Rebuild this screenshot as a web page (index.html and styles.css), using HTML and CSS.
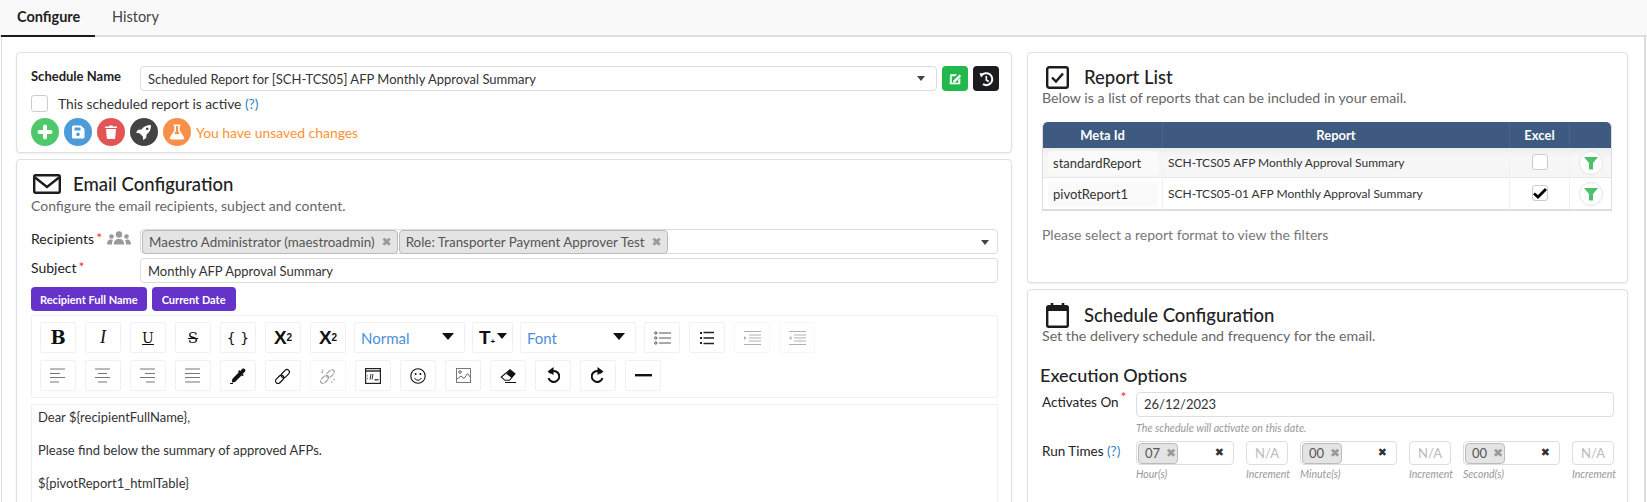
FILE: index.html
```html
<!DOCTYPE html>
<html lang="en">
<head>
<meta charset="utf-8">
<title>Scheduled Report</title>
<link rel="stylesheet" href="styles.css">
</head>
<body>
<nav class="tabs">
  <a class="tab tab-active">Configure</a>
  <a class="tab">History</a>
</nav>
<main class="page">
  <div class="col col-left">
    <section class="card card-name">
      <div class="name-row">
        <label class="name-label">Schedule Name</label>
        <div class="field field-grow">
          <span>Scheduled Report for [SCH-TCS05] AFP Monthly Approval Summary</span>
          <svg class="caret" viewBox="0 0 8 5"><path d="M0 0h8L4 5z"/></svg>
        </div>
        <button class="sq-btn sq-green"><svg viewBox="0 0 16 16" width="16" height="16"><path d="M3.500 3.500h6l-1.500 1.500H4.500v7h7V9l1.500-1.500v5.500H3z" fill="#fff" stroke="#fff" stroke-width=".6"/><path d="M6.500 9.500l6-6 1.700 1.700-6 6-2.200.5z" fill="#fff"/></svg></button>
        <button class="sq-btn sq-dark"><svg viewBox="0 0 16 16" width="16" height="16"><path d="M3.500 4.500A6 6 0 1 1 5 13.200" fill="none" stroke="#fff" stroke-width="2"/><path d="M1.500 2l5 .5-3.500 4z" fill="#fff"/><path d="M8.300 5v4l2.500 1.500" fill="none" stroke="#fff" stroke-width="1.600"/></svg></button>
      </div>
      <div class="active-row">
        <span class="check"></span>
        <span>This scheduled report is active <a class="help">(?)</a></span>
      </div>
      <div class="action-row">
        <button class="round r-green"><svg viewBox="0 0 28 28"><path d="M14 8.500v11M8.500 14h11" stroke="#fff" stroke-width="4" stroke-linecap="round"/></svg></button>
        <button class="round r-blue"><svg viewBox="0 0 28 28"><path fill="#fff" fill-rule="evenodd" d="M9.500 7.500h7.500l3.500 3.500v8a1.500 1.500 0 0 1-1.500 1.500H9.500A1.500 1.500 0 0 1 8 19V9a1.500 1.500 0 0 1 1.500-1.500zM10.500 9.500v3h6v-3zM14 14.500a1.800 1.800 0 1 0 .01 0z"/></svg></button>
        <button class="round r-red"><svg viewBox="0 0 28 28"><path fill="#fff" d="M8 8.500h4l.5-1h3l.5 1h4V10H8zM9 11h10l-.8 9a1 1 0 0 1-1 1h-6.400a1 1 0 0 1-1-1z"/></svg></button>
        <button class="round r-dark"><svg viewBox="0 0 28 28"><path fill="#fff" fill-rule="evenodd" d="M21 7c-4.500 0-7.500 1.500-9.500 4.500l-3.500.3-2 3 3.500.4 3.300 3.300.4 3.500 3-2 .3-3.500C19.500 14.500 21 11.500 21 7zM17.200 9.500a1.300 1.300 0 1 0 .01 0z"/></svg></button>
        <button class="round r-orange"><svg viewBox="0 0 28 28"><path fill="#fff" fill-rule="evenodd" d="M10.500 6.500h7V8h-.8v4.500l4.300 6.700c.7 1.100-.1 2.300-1.300 2.300H8.300c-1.200 0-2-1.200-1.300-2.300l4.300-6.700V8h-.8zM13 8v5l-1.800 3h5.600L15 13V8z"/></svg></button>
        <span class="unsaved">You have unsaved changes</span>
      </div>
    </section>

    <section class="card card-email">
      <header class="head head-email">
        <svg class="head-icon" viewBox="0 0 28 20" width="28" height="20"><rect x="1.200" y="1.200" width="25.600" height="17.600" rx="1.500" fill="none" stroke="#1c1c1c" stroke-width="2.400"/><path d="M2 3.500l12 9.500 12-9.500" fill="none" stroke="#1c1c1c" stroke-width="2.400"/></svg>
        <h2 class="head-title">Email Configuration</h2>
      </header>
      <p class="sub">Configure the email recipients, subject and content.</p>
      <div class="form-row form-row-first">
        <label class="form-label">Recipients<sup class="req">*</sup>
          <svg class="users" viewBox="0 0 24 14" width="24" height="14"><circle cx="12" cy="3.500" r="3.200" fill="#9a9a9a"/><circle cx="4.500" cy="5.500" r="2.300" fill="#9a9a9a"/><circle cx="19.500" cy="5.500" r="2.300" fill="#9a9a9a"/><path d="M6.800 13.500c0-3.500 1.800-5.500 5.200-5.500s5.200 2 5.200 5.500zM0 13.500c0-3 1.300-5 3.500-5 1 0 2 .3 2.500.8-.8 1-1 2.500-1 4.200zM24 13.500c0-3-1.300-5-3.500-5-1 0-2 .3-2.500.8.800 1 1 2.500 1 4.200z" fill="#9a9a9a"/></svg>
        </label>
        <div class="field field-grow field-tags">
          <span class="tag tag-wide">Maestro Administrator (maestroadmin)<i class="tag-x">✖</i></span>
          <span class="tag tag-wide">Role: Transporter Payment Approver Test<i class="tag-x">✖</i></span>
          <svg class="caret caret-end" viewBox="0 0 8 5"><path d="M0 0h8L4 5z"/></svg>
        </div>
      </div>
      <div class="form-row">
        <label class="form-label">Subject<sup class="req">*</sup></label>
        <div class="field field-grow">Monthly AFP Approval Summary</div>
      </div>
      <div class="var-row">
        <button class="var-btn">Recipient Full Name</button>
        <button class="var-btn">Current Date</button>
      </div>
      <div class="toolbar">
        <div class="tool-row">
          <span class="tool t-bold">B</span>
          <span class="tool t-italic">I</span>
          <span class="tool t-under">U</span>
          <span class="tool t-strike">S</span>
          <span class="tool t-code">{ }</span>
          <span class="tool t-script">X<sup>2</sup></span>
          <span class="tool t-script">X<sub>2</sub></span>
          <span class="tool dd dd-normal"><span class="dd-text">Normal</span><i class="dd-caret"></i></span>
          <span class="tool dd dd-size"><span class="t-size">T<small>+</small></span><i class="dd-caret"></i></span>
          <span class="tool dd dd-font"><span class="dd-text">Font</span><i class="dd-caret"></i></span>
          <span class="tool tool-after"><svg viewBox="0 0 17 14" width="17" height="14"><g fill="none" stroke="#555"><circle cx="1.800" cy="2" r="1.200"/><circle cx="1.800" cy="7" r="1.200"/><circle cx="1.800" cy="12" r="1.200"/></g><path d="M5 2h12M5 7h12M5 12h12" stroke="#555" stroke-width="1.200"/></svg></span>
          <span class="tool"><svg viewBox="0 0 14 14" width="14" height="14"><path d="M0 1h2v2H0zM0 6h2v2H0zM0 11h2v2H0z" fill="#222"/><path d="M3.500 1.500h10.500M3.500 7h10.500M3.500 12.500h10.500" stroke="#222" stroke-width="1.400"/></svg></span>
          <span class="tool tool-off"><svg viewBox="0 0 17 14" width="17" height="14"><path d="M0 .5h17M5 4h12M5 7h12M5 10h12M0 13.500h17" stroke="#555"/><path d="M0 5l2.500 2L0 9z" fill="#555"/></svg></span>
          <span class="tool tool-off"><svg viewBox="0 0 17 14" width="17" height="14"><path d="M0 .5h17M5 4h12M5 7h12M5 10h12M0 13.500h17" stroke="#555"/><path d="M2.500 5L0 7l2.500 2z" fill="#555"/></svg></span>
        </div>
        <div class="tool-row">
          <span class="tool"><svg viewBox="0 0 16 15" width="16" height="15"><path d="M0 1h15M0 5.500h10M0 9.500h15M0 14h9" stroke="#777"/></svg></span>
          <span class="tool"><svg viewBox="0 0 16 15" width="16" height="15"><path d="M0 1h15M3 5.500h9M0 9.500h15M3 14h9" stroke="#777"/></svg></span>
          <span class="tool"><svg viewBox="0 0 16 15" width="16" height="15"><path d="M0 1h15M5 5.500h10M0 9.500h15M6 14h9" stroke="#777"/></svg></span>
          <span class="tool"><svg viewBox="0 0 16 15" width="16" height="15"><path d="M0 1h15M0 5.500h15M0 9.500h15M0 14h15" stroke="#777"/></svg></span>
          <span class="tool"><svg viewBox="0 0 16 16" width="16" height="16"><path d="M9.500 3.500l3 3-7.500 7.500-3.200.5.500-3.500z" fill="#111"/><path d="M9 2l1.500 1 1.500-2c1-.8 2.300-.5 3 .3.600.8.600 2-.3 2.700l-2 1.700 1 1.500-1 1-4.500-4.500z" fill="#111"/><path d="M0 15.500h3" stroke="#111"/></svg></span>
          <span class="tool"><svg viewBox="0 0 16 16" width="16" height="16"><g fill="none" stroke="#111" stroke-width="1.200" transform="rotate(-45 8 8)"><rect x="-1.500" y="5.500" width="9.500" height="5" rx="2.500"/><rect x="6.500" y="5.500" width="9.500" height="5" rx="2.500"/></g></svg></span>
          <span class="tool tool-off"><svg viewBox="0 0 16 16" width="16" height="16"><g fill="none" stroke="#333" stroke-width="1.200" stroke-dasharray="5 1" transform="rotate(-45 8 8)"><rect x="-1.500" y="5.500" width="9.500" height="5" rx="2.500"/><rect x="6.500" y="5.500" width="9.500" height="5" rx="2.500"/></g><path d="M2 1.500l1 2M1 4l2 .5M12 15l-.5-2M15 12l-2-.5" stroke="#333"/></svg></span>
          <span class="tool"><svg viewBox="0 0 16 16" width="16" height="16"><rect x=".6" y=".6" width="14.800" height="14.800" fill="none" stroke="#222" stroke-width="1.200"/><path d="M.6 3h14.800" stroke="#222" stroke-width="1.400"/><path d="M2.500 7.500v.8M2.500 10v.8M6 6l-1 5.500M8 6l-1 5.500" stroke="#222" stroke-width=".9"/><path d="M9.500 11.800h4" stroke="#222" stroke-width="1.200"/></svg></span>
          <span class="tool"><svg viewBox="0 0 16 16" width="16" height="16"><circle cx="8" cy="8" r="7.200" fill="none" stroke="#111" stroke-width="1.100"/><circle cx="5.600" cy="6" r="1" fill="#111"/><circle cx="10.400" cy="6" r="1" fill="#111"/><path d="M4.500 10c1 1.500 2.200 2.200 3.500 2.200s2.500-.7 3.500-2.200" fill="none" stroke="#111"/></svg></span>
          <span class="tool"><svg viewBox="0 0 15 15" width="15" height="15"><rect x=".5" y=".5" width="14" height="14" fill="none" stroke="#777"/><circle cx="4" cy="4" r="1.300" fill="none" stroke="#666"/><path d="M1 11l4-3 3 2.500 3.500-5 3 4" fill="none" stroke="#666"/></svg></span>
          <span class="tool"><svg viewBox="0 0 16 14" width="16" height="14"><path d="M10 .8l5 4-5.500 6.500H5L1.200 8z" fill="#fff" stroke="#111" stroke-width="1.100"/><path d="M10 .8l5 4-3.500 4.200-5.200-4.300z" fill="#111"/><path d="M5 13.500h11" stroke="#111"/></svg></span>
          <span class="tool"><svg viewBox="0 0 14 17" width="14" height="17"><path d="M3.300 6.200a5.500 5.500 0 1 1-.8 4.800" fill="none" stroke="#111" stroke-width="2"/><path d="M7.500 0v8L1.500 4.500z" fill="#111"/></svg></span>
          <span class="tool"><svg viewBox="0 0 14 17" width="14" height="17"><path d="M10.700 6.200a5.500 5.500 0 1 0 .8 4.800" fill="none" stroke="#111" stroke-width="2"/><path d="M6.500 0v8l6-3.500z" fill="#111"/></svg></span>
          <span class="tool"><svg viewBox="0 0 17 3" width="17" height="3"><rect width="17" height="2.400" fill="#111"/></svg></span>
        </div>
      </div>
      <div class="editor">
        <p>Dear ${recipientFullName},</p>
        <p>Please find below the summary of approved AFPs.</p>
        <p>${pivotReport1_htmlTable}</p>
      </div>
    </section>
  </div>

  <div class="col col-right">
    <section class="card card-reports">
      <header class="head">
        <svg class="head-icon-r" viewBox="0 0 23 23" width="23" height="23"><rect x="1.200" y="1.200" width="20.600" height="20.600" rx="2" fill="none" stroke="#1c1c1c" stroke-width="2.400"/><path d="M6 11.500l4 4 7-8" fill="none" stroke="#1c1c1c" stroke-width="2.400"/></svg>
        <h2 class="head-title">Report List</h2>
      </header>
      <p class="sub sub-r">Below is a list of reports that can be included in your email.</p>
      <table class="reports">
        <colgroup><col class="c-id"><col class="c-report"><col class="c-excel"><col class="c-filter"></colgroup>
        <thead><tr><th>Meta Id</th><th>Report</th><th>Excel</th><th></th></tr></thead>
        <tbody>
          <tr class="row-shade">
            <td><span class="pill">standardReport</span></td>
            <td>SCH-TCS05 AFP Monthly Approval Summary</td>
            <td class="center"><span class="tick"></span></td>
            <td class="center"><span class="filter"><svg viewBox="0 0 14 14" width="14" height="14"><path d="M0 1h14L9 7v6.500H5V7z" fill="#4cc16a"/></svg></span></td>
          </tr>
          <tr>
            <td><span class="pill">pivotReport1</span></td>
            <td>SCH-TCS05-01 AFP Monthly Approval Summary</td>
            <td class="center"><span class="tick tick-on"><svg viewBox="0 0 16 16" width="16" height="16"><path d="M2 8.500l4 3.500 8-8" fill="none" stroke="#000" stroke-width="2.800"/></svg></span></td>
            <td class="center"><span class="filter"><svg viewBox="0 0 14 14" width="14" height="14"><path d="M0 1h14L9 7v6.500H5V7z" fill="#4cc16a"/></svg></span></td>
          </tr>
        </tbody>
      </table>
      <p class="note">Please select a report format to view the filters</p>
    </section>

    <section class="card card-schedule">
      <header class="head">
        <svg class="head-icon-r" viewBox="0 0 23 25" width="23" height="25"><rect x="1.200" y="3.200" width="20.600" height="20.600" rx="1.500" fill="none" stroke="#1c1c1c" stroke-width="2.400"/><path d="M1 4h21v4H1z" fill="#1c1c1c"/><path d="M6 0v4M17 0v4" stroke="#1c1c1c" stroke-width="2.600"/></svg>
        <h2 class="head-title">Schedule Configuration</h2>
      </header>
      <p class="sub sub-r">Set the delivery schedule and frequency for the email.</p>
      <h3 class="exec">Execution Options</h3>
      <div class="exec-row">
        <label class="exec-label">Activates On<sup class="req">*</sup></label>
        <div class="exec-main">
          <div class="field">26/12/2023</div>
          <small class="hint hint-date">The schedule will activate on this date.</small>
        </div>
      </div>
      <div class="exec-row exec-times">
        <label class="exec-label">Run Times <a class="help">(?)</a></label>
        <div class="times">
          <div class="time t-first"><div class="field time-box"><span class="tag tag-time">07<i class="tag-x">✖</i></span><i class="clear">✖</i></div><small class="hint">Hour(s)</small></div>
          <div class="incr"><div class="field na">N/A</div><small class="hint">Increment</small></div>
          <div class="time"><div class="field time-box"><span class="tag tag-time">00<i class="tag-x">✖</i></span><i class="clear">✖</i></div><small class="hint">Minute(s)</small></div>
          <div class="incr"><div class="field na">N/A</div><small class="hint">Increment</small></div>
          <div class="time"><div class="field time-box"><span class="tag tag-time">00<i class="tag-x">✖</i></span><i class="clear">✖</i></div><small class="hint">Second(s)</small></div>
          <div class="incr"><div class="field na">N/A</div><small class="hint">Increment</small></div>
        </div>
      </div>
    </section>
  </div>
</main>
</body>
</html>
```
FILE: styles.css
```css
* { box-sizing: border-box; }
html, body { margin: 0; height: 502px; overflow: hidden; }
body { font-family: Lato, "Noto Sans", sans-serif; font-size: 14px; color: #222; background: #fff; }
button { font: inherit; border: 0; padding: 0; }
p, h2, h3 { margin: 0; }

.tabs { display: flex; height: 37px; background: #f9f9f9; border-bottom: 2px solid #ddd; padding-left: 1px; }
.tab { height: 37px; padding: 8px 16px 0; line-height: 18px; font-size: 14.5px; color: #444; width: 94px; }
.tab + .tab { padding-left: 17px; }
.tab-active { font-weight: 700; color: #222; border-bottom: 2px solid #1c1c1c; }

.page { display: flex; gap: 15px; height: 465px; overflow: hidden; padding: 15px 17px 0 15px; border-left: 1px solid #ddd; border-right: 2px solid #ddd; margin-left: 1px; margin-right: 1px; }
.col { display: flex; flex-direction: column; gap: 6px; flex: none; }
.col-left { width: 996px; margin-left: -1px; }
.col-right { width: 601px; }
.card { background: #fff; border: 1px solid #e0e0e0; border-radius: 4px; box-shadow: 0 1px 2px rgba(0,0,0,.08); flex: none; }

.card-name { height: 101px; padding: 13px 12px 0 14px; }
.name-row { display: flex; align-items: center; gap: 5px; }
.name-label { width: 104px; font-weight: 700; font-size: 13px; line-height: 21px; height: 25px; color: #222; }
.field { height: 25px; border: 1px solid #ddd; border-radius: 4px; background: #fff; padding: 0 7px; line-height: 22px; color: #333; font-size: 13px; }
.field-grow { flex: 1; min-width: 0; display: flex; align-items: center; justify-content: space-between; }
.caret { width: 8px; height: 5px; fill: #444; margin-right: 4px; }
.sq-btn { width: 26px; height: 25px; border-radius: 4px; display: flex; align-items: center; justify-content: center; }
.sq-green { background: #22b84c; }
.sq-dark { background: #1b1c1e; }

.active-row { display: flex; align-items: center; gap: 10px; margin-top: 4px; height: 17px; color: #333; font-size: 13.8px; }
.check { width: 17px; height: 17px; border: 1px solid #ccc; border-radius: 3px; background: #fff; }
.help { color: #2f7fc1; }
.action-row { display: flex; align-items: center; gap: 5px; margin-top: 6px; }
.round { width: 28px; height: 28px; border-radius: 50%; display: block; }
.round svg { display: block; width: 28px; height: 28px; }
.r-green { background: #4fc86c; }
.r-blue { background: #4c9cd9; }
.r-red { background: #e35454; }
.r-dark { background: #444; }
.r-orange { background: #f9904a; }
.unsaved { color: #fb9233; font-size: 13.9px; }

.card-email { height: 400px; padding: 12px 13px 0 14px; }
.head { display: flex; align-items: center; height: 24px; }
.head-icon { margin-left: 2px; margin-right: 12px; }
.head-icon-r { margin-left: 4px; margin-right: 15px; }
.head-title { font-size: 18.5px; font-weight: 500; color: #222; line-height: 24px; }
.sub { color: #666; font-size: 14px; line-height: 18px; margin-top: 1px; }
.req { color: #e33; font-size: 14px; line-height: 0; margin-left: 2px; }

.form-row { display: flex; align-items: flex-start; margin-top: 4px; }
.form-row-first { margin-top: 14px; }
.form-label { width: 109px; display: flex; align-items: center; height: 18px; color: #222; font-size: 14px; }
.users { margin-left: 5px; }
.field-tags { justify-content: flex-start; padding: 0 0 0 1px; position: relative; }
.tag { display: inline-flex; align-items: center; background: #e4e4e4; border: 1px solid #bbb; border-radius: 4px; color: #555; font-size: 13.4px; }
.tag-wide { height: 24px; padding: 0 5px 0 6px; gap: 7px; margin-right: 1px; white-space: nowrap; }
.tag-x { font-style: normal; color: #999; font-size: 12px; font-family: "DejaVu Sans", sans-serif; }
.caret-end { position: absolute; right: 4px; top: 10px; }

.var-row { display: flex; gap: 5px; margin-top: 4px; }
.var-btn { height: 24px; padding: 0 9px; border-radius: 4px; background: #6533c9; color: #fff; font-weight: 700; font-size: 11px; }
.var-btn + .var-btn { padding: 0 10px; }

.toolbar { margin-top: 4px; border: 1px solid #f1f1f1; border-radius: 2px; padding: 6px 8px; display: flex; flex-direction: column; gap: 7px; }
.tool-row { display: flex; gap: 9px; }
.tool { width: 36px; height: 31px; border: 1px solid #f1f1f1; border-radius: 2px; background: #fff; display: flex; align-items: center; justify-content: center; color: #111; flex: none; }
.tool-off { border-color: #f7f7f7; }
.tool-off svg { opacity: .45; }
.t-bold { font-family: "DejaVu Serif", serif; font-weight: 700; font-size: 18px; }
.t-italic { font-family: "Liberation Serif", serif; font-style: italic; font-size: 18px; }
.t-under { font-family: "DejaVu Serif", serif; font-size: 14px; text-decoration: underline; }
.t-strike { font-family: "DejaVu Serif", serif; font-size: 15px; text-decoration: line-through; }
.t-code { font-family: "DejaVu Sans", sans-serif; font-size: 14px; }
.t-script { font-family: "Liberation Sans", sans-serif; font-weight: 700; font-size: 19px; }
.t-script sup, .t-script sub { font-size: 10px; line-height: 0; }
.dd { justify-content: space-between; margin-left: -2px; padding: 0 10px 0 6px; }
.dd-normal { width: 111px; margin-left: -1px; }
.dd-size { width: 41px; padding: 0 5px 0 6px; }
.dd-font { width: 116px; }
.tool-after { margin-left: -1px; }
.dd-text { color: #4a90d9; font-size: 15px; }
.dd-caret { width: 0; height: 0; border-left: 6px solid transparent; border-right: 6px solid transparent; border-top: 7px solid #111; margin-bottom: 3px; }
.dd-size .dd-caret { border-left-width: 5px; border-right-width: 5px; border-top-width: 6px; }
.t-size { font-family: "Liberation Sans", sans-serif; font-weight: 700; font-size: 19px; }
.t-size small { font-size: 8px; }

.editor { margin-top: 6px; height: 200px; border: 1px solid #f1f1f1; padding: 2px 6px; color: #333; font-size: 13px; line-height: 20px; }
.editor p { margin-bottom: 13px; }

.card-reports { height: 231px; padding: 12px 14px 0 14px; }
.sub-r { margin-top: 0; font-size: 14.2px; }
.reports { width: 570px; margin-top: 15px; border-collapse: separate; border-spacing: 0; table-layout: fixed; font-size: 12px; color: #333; border: 1px solid #ddd; border-bottom-width: 2px; border-top: 0; border-radius: 5px 5px 0 0; }
.c-id { width: 120px; }
.c-report { width: 347px; }
.c-excel { width: 60px; }
.reports th { height: 26px; background: #3e5a80; color: #fff; font-weight: 700; font-size: 13px; border-right: 1px solid #4a6589; padding: 0; }
.reports th:first-child { border-top-left-radius: 5px; }
.reports th:last-child { border-top-right-radius: 5px; border-right: 0; }
.reports td { padding: 0 0 0 5px; height: 31px; border-right: 1px solid #f1f1f1; }
.reports td:last-child { border-right: 0; }
.reports td.center { padding: 0; text-align: center; }
.row-shade td { background: linear-gradient(#ececec, #f7f7f7 30%, #f6f6f6); border-bottom: 1px solid #e8e8e8; height: 30px; }
.pill { display: inline-block; padding: 0 5px; line-height: 24px; background: #fafafa; border-radius: 4px; width: 110px; font-size: 13px; }
.tick { display: inline-block; width: 16px; height: 16px; border: 1px solid #ccc; border-radius: 3px; background: #fff; vertical-align: middle; overflow: hidden; position: relative; top: -1px; }
.tick svg { display: block; margin: -1px; }
.filter { display: inline-flex; align-items: center; justify-content: center; width: 24px; height: 24px; border: 1px solid #e3e3e3; border-radius: 50%; background: #fff; vertical-align: middle; }
.note { margin-top: 15px; color: #777; font-size: 14px; line-height: 18px; }

.card-schedule { height: 300px; padding: 13px 13px 0 14px; }
.exec { margin-top: 19px; font-size: 18px; font-weight: 500; color: #222; line-height: 22px; margin-left: -2px; }
.exec-row { display: flex; margin-top: 6px; }
.exec-times { margin-top: 7px; }
.exec-label { width: 94px; flex: none; line-height: 20px; color: #222; font-size: 13.5px; }
.exec-main { flex: 1; }
.hint { display: block; font-size: 10.5px; font-style: italic; color: #999; line-height: 13px; margin-top: 3px; white-space: nowrap; }
.hint-date { font-size: 10.7px; margin-top: 4px; }
.times { flex: 1; display: flex; gap: 12px; }
.time { width: 97px; flex: none; }
.t-first { width: 98px; }
.incr { width: 42px; flex: none; text-align: right; }
.time-box { height: 24px; padding: 0 9px 0 1px; display: flex; align-items: center; justify-content: space-between; }
.tag-time { height: 21px; width: 40px; padding: 0 6px; gap: 6px; justify-content: flex-start; font-size: 13px; }
.clear { font-style: normal; font-size: 11px; color: #333; font-family: "DejaVu Sans", sans-serif; }
.na { height: 24px; line-height: 22px; padding: 0; text-align: center; color: #bbb; }
```
